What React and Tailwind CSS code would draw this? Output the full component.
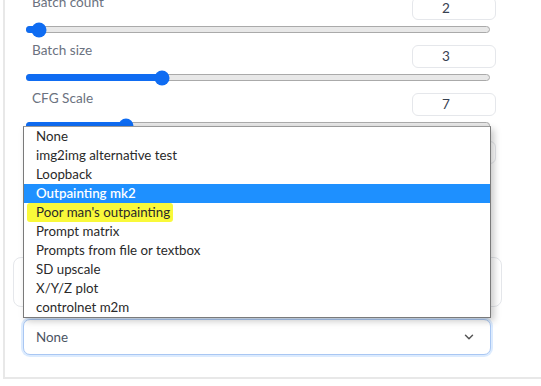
import React from 'react';
import { ChevronDown } from 'lucide-react';

const sliders = [
  { label: 'Batch count', value: '2', fill: 12 },
  { label: 'Batch size', value: '3', fill: 135 },
  { label: 'CFG Scale', value: '7', fill: 99 },
  { label: '', value: '0.75', fill: 340 },
];

const scripts = [
  'None',
  'img2img alternative test',
  'Loopback',
  'Outpainting mk2',
  "Poor man's outpainting",
  'Prompt matrix',
  'Prompts from file or textbox',
  'SD upscale',
  'X/Y/Z plot',
  'controlnet m2m',
];

function SliderRow({ label, value, fill }) {
  return (
    <div className="flex flex-col">
      <div className="flex items-start justify-between">
        <span className="-mt-[4px] pl-[9px] text-[13.6px] leading-[18px] text-[#6b7280]">{label}</span>
        <div className="flex h-[23px] w-[84px] items-center justify-center rounded-[6px] border border-[#e5e7eb] bg-white pr-[16px] text-[13.6px] text-[#374151]">
          {value}
        </div>
      </div>
      <div className="relative ml-[3px] mt-[6px] mb-[12px] h-[7px] w-[464px] rounded-full border border-[#aaaaaa] bg-[#e8e8e8]">
        <div className="absolute -left-px -top-px h-[7px] rounded-full bg-[#0f6cf2]" style={{ width: fill + 1 }} />
        <div
          className="absolute top-1/2 h-[15px] w-[15px] -translate-x-1/2 -translate-y-1/2 rounded-full bg-[#0f6cf2]"
          style={{ left: fill }}
        />
      </div>
    </div>
  );
}

export default function App() {
  return (
    <div className="relative h-[386px] w-[541px] overflow-hidden bg-white font-['Lato','Noto_Sans',sans-serif]">
      <div className="ml-[3px] h-[382px] border-b-2 border-l-2 border-[#e8e8e8] pl-[18px]">
        <div className="-mt-[3px] flex w-[473px] flex-col">
          {sliders.map((s) => (
            <SliderRow key={s.value} {...s} />
          ))}
          <div className="h-[68px]" />
          <div className="-ml-[10px] h-[50px] w-[489px] rounded-[8px] border border-[#e5e7eb] bg-white" />
          <div className="mt-[12px] flex h-[36px] w-[468px] items-center justify-between rounded-[7px] border border-[#a9c7f3] bg-white pl-[12px] pr-[14px] shadow-[0_0_0_2px_rgba(191,219,254,0.55)]">
            <span className="text-[13.4px] text-[#4b5563]">None</span>
            <ChevronDown className="h-[14px] w-[14px] text-[#555]" strokeWidth={2.5} />
          </div>
        </div>
      </div>

      <div className="absolute left-[23px] top-[126px] h-[192px] w-[468px] border border-[#7a7a7a] border-t-[#9a9a9a] bg-white shadow-[3px_3px_7px_rgba(0,0,0,0.22)]">
        {scripts.map((s, i) => (
          <div
            key={s}
            className={
              i === 3
                ? 'flex h-[19px] items-center bg-[#1e90ff] pl-[12px] text-[13.3px] font-semibold text-white'
                : 'flex h-[19px] items-center pl-[12px] text-[13.3px] text-[#2a2a2a]'
            }
          >
            {i === 4 ? (
              <span className="-ml-[9px] rounded-[3px] bg-[#f9f93a] pl-[9px] pr-[3px] leading-[19px]">{s}</span>
            ) : (
              s
            )}
          </div>
        ))}
      </div>
    </div>
  );
}
